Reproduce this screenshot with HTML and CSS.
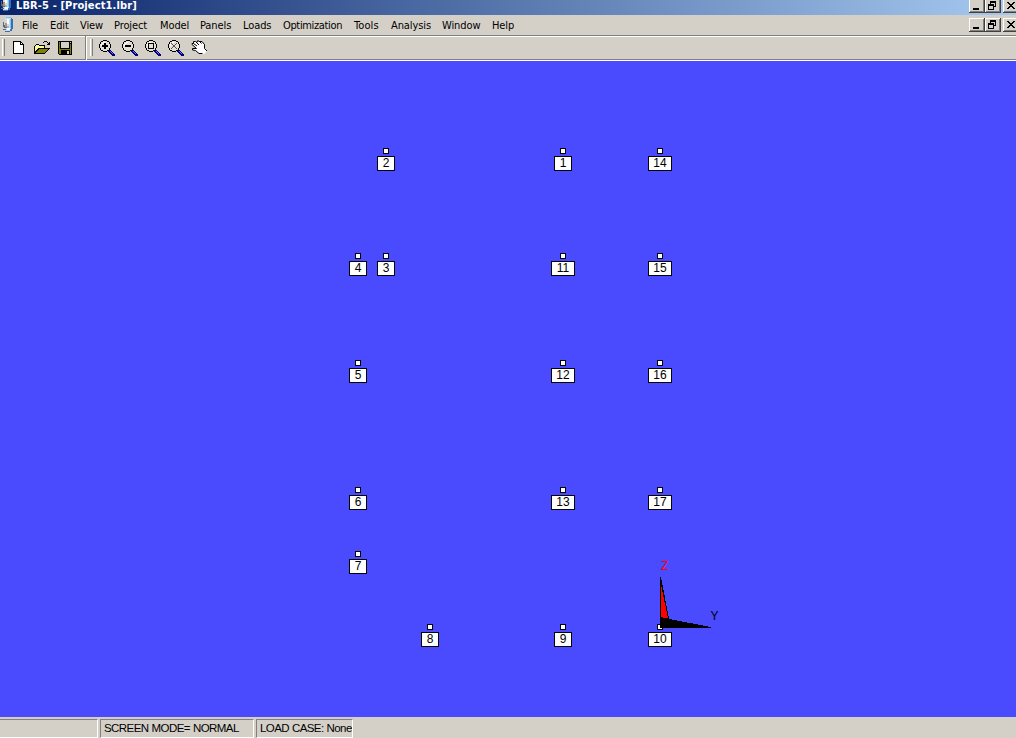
FILE: index.html
```html
<!DOCTYPE html>
<html lang="en">
<head>
<meta charset="utf-8">
<title>LBR-5 - [Project1.lbr]</title>
<link rel="stylesheet" href="styles.css">
</head>
<body>
<svg width="0" height="0" class="defs" shape-rendering="crispEdges">
  <defs>
    <symbol id="app" viewBox="0 0 12 16">
      <path fill="#c4def2" d="M3 1h6v13H3z"/>
      <path fill="#2f72b8" d="M9 1h1v1h1v10h-1v2H8v-2h1z"/>
      <path fill="#8fbde4" d="M4 0h5v1H4zM8 2h1v9H8zM5 9h2v2H5z"/>
      <path fill="#4a6c94" d="M1 5h1v3h1v2h2v1H2v-1H1zM3 14h5v1H3zM1 12h3v1H1z"/>
      <path fill="#d88848" d="M3 6h2v4H3z"/>
      <path fill="#fff" d="M5 2h2v5H5zM5 11h3v2H5z"/>
    </symbol>
    <symbol id="lens" viewBox="0 0 17 17">
      <path fill="#e4e0d8" d="M4 1h4v1h2v2h1v4h-1v2H8v1H4v-1H2V8H1V4h1V2h2z"/>
      <path fill="#000" d="M4 0h4v1H4zM2 1h2v1H2zM8 1h2v1H8zM1 2h1v2H1zM10 2h1v2h-1zM0 4h1v4H0zM11 4h1v4h-1zM1 8h1v2H1zM10 8h1v2h-1zM2 10h2v1H2zM8 10h2v1H8zM4 11h4v1H4z"/>
      <path fill="#fff" d="M3 3h1v1H3zM4 2h2v1H4zM2 4h1v2H2z"/>
      <path fill="#000080" d="M10 10h2v1h1v1h1v1h1v1h1v2h-3v-1h-1v-1h-1v-1h-1v-1H9v-1h1z"/>
      <path fill="#7878d0" d="M11 11h1v1h-1zM12 12h1v1h-1zM13 13h1v1h-1z"/>
    </symbol>
    <symbol id="min" viewBox="0 0 16 14"><path d="M4 9h6v2H4z"/></symbol>
    <symbol id="restore" viewBox="0 0 16 14"><path d="M5 2h6v6H9V7h1V4H6v1H5zM3 5h6v6H3zM4 7v3h4V7z" fill-rule="evenodd"/></symbol>
    <symbol id="close" viewBox="0 0 16 14"><path d="M4 3h2v1h1v1h2V4h1V3h2v1h-1v1h-1v1H9v1h1v1h1v1h1v1h-2V9H9V8H7v1H6v1H4V9h1V8h1V7h1V6H6V5H5V4H4z"/></symbol>
  </defs>
</svg>
<div class="window">
  <header class="titlebar">
    <svg class="app-icon" width="12" height="16"><use href="#app"/></svg>
    <h1>LBR-5 - [Project1.lbr]</h1>
    <div class="controls">
      <b class="btn"><svg width="16" height="14"><use href="#min"/></svg></b>
      <b class="btn"><svg width="16" height="14"><use href="#restore"/></svg></b>
      <b class="btn last"><svg width="16" height="14"><use href="#close"/></svg></b>
    </div>
  </header>
  <nav class="menubar">
    <svg class="app-icon" width="12" height="16"><use href="#app"/></svg>
    <div class="menus"><span>File</span><span>Edit</span><span>View</span><span>Project</span><span>Model</span><span>Panels</span><span>Loads</span><span class="optimization">Optimization</span><span class="tools">Tools</span><span>Analysis</span><span>Window</span><span>Help</span></div>
    <div class="controls">
      <b class="btn"><svg width="16" height="14"><use href="#min"/></svg></b>
      <b class="btn"><svg width="16" height="14"><use href="#restore"/></svg></b>
      <b class="btn last"><svg width="16" height="14"><use href="#close"/></svg></b>
    </div>
  </nav>
  <div class="toolbar">
    <div class="group files">
      <i class="grip"></i>
      <svg width="11" height="13" viewBox="0 0 11 13" shape-rendering="crispEdges">
        <path d="M0 0h8v1h1v1h1v1h1v10H0z"/><path fill="#fff" d="M1 1h6v3h3v8H1zM8 2h1v1H8z"/>
      </svg>
      <svg width="17" height="14" viewBox="0 0 17 14" shape-rendering="crispEdges">
        <path d="M1 4h1V3h3v1h6v3h5v1h-1v1h-1v1h-1v1h-1v1h-1v1H0V5h1z"/>
        <path fill="#ff6" d="M1 5h1V4h3v1h5v2H4v1H3v1H2v1H1z"/>
        <path fill="#fff" d="M2 4h1v1H2zM4 4h1v1H4zM3 5h1v1H3zM5 5h1v1H5zM7 5h1v1H7zM2 6h1v1H2zM6 6h1v1H6z"/>
        <path fill="#808000" d="M5 8h9v1h-1v1h-1v1h-1v1H2v-1h1v-1h1V9h1z"/>
        <path d="M9 1h1V0h3v1h1v1h1V1h1v3h-3V3h1V2h-1V1h-3v1H9z"/>
      </svg>
      <svg class="save" width="14" height="14" viewBox="0 0 14 14" shape-rendering="crispEdges">
        <path d="M0 0h14v14H1v-1H0z"/><path fill="#808000" d="M1 1h1v7h10V3h1v10H1z"/>
        <path fill="#d4d0c8" d="M3 1h8v6H3zM12 1h1v1h-1z"/><path d="M3 9h9v4H3z"/><path fill="#d4d0c8" d="M9 10h2v3H9z"/>
      </svg>
    </div>
    <div class="group zooms">
      <i class="grip"></i>
      <svg width="17" height="17" viewBox="0 0 17 17" shape-rendering="crispEdges"><use href="#lens"/><path d="M5 3h2v2h2v2H7v2H5V7H3V5h2z"/></svg>
      <svg width="17" height="17" viewBox="0 0 17 17" shape-rendering="crispEdges"><use href="#lens"/><path d="M3 5h6v2H3z"/></svg>
      <svg width="17" height="17" viewBox="0 0 17 17" shape-rendering="crispEdges"><use href="#lens"/><path fill-rule="evenodd" d="M3 3h6v6H3zM4 4v4h4V4z"/></svg>
      <svg width="17" height="17" viewBox="0 0 17 17" shape-rendering="crispEdges"><use href="#lens"/><path fill="#555" d="M3 3h1v1H3zM4 4h1v1H4zM5 5h2v2H5zM7 4h1v1H7zM8 3h1v1H8zM4 7h1v1H4zM3 8h1v1H3zM7 7h1v1H7zM8 8h1v1H8z"/></svg>
      <svg class="hand" width="17" height="15" viewBox="0 0 17 15">
        <path fill="#fff" d="M1 3h2L2 1h2l3 1 1-1 5 3 1 5 2 2-3 3H8l-3-3-3-1V8h3z"/>
        <path fill="none" stroke="#000" d="M5.500 8.500 1 4.500v-1h1.500L6 6M2.500 3.500v-2h2L8 5M6 2.500V1h2l2.500 2.500M9 1.500h2l2.500 3v4l2.500 2.500M5.500 8.500h-4v1.500l3 .5 3.500 3h3.500"/>
      </svg>
    </div>
  </div>
  <main>
    <svg class="model" width="1016" height="656" viewBox="0 61 1016 656" id="model" shape-rendering="crispEdges">
      <g id="nodes"></g>
      <path d="M660 577h1l8 42 42 8v1h-51z"/>
      <path fill="#f00" d="M661 585v32l3 1h4z"/>
      <text class="axis z" x="661" y="570">Z</text>
      <text class="axis y" x="710.500" y="620">Y</text>
    </svg>
  </main>
  <footer class="status">
    <div class="pane"></div><div class="pane mode">SCREEN MODE= NORMAL</div><div class="pane load">LOAD CASE: None</div>
  </footer>
</div>
<script src="model.js"></script>
</body>
</html>
```
FILE: styles.css
```css
body { margin: 0; overflow: hidden; background: #d4d0c8; color: #000; font: 11px/13px "DejaVu Sans Condensed", "DejaVu Sans", sans-serif; }
.defs { position: absolute; }
.window { width: 1016px; height: 738px; display: flex; flex-direction: column; overflow: hidden; }
.titlebar { height: 15px; flex: none; display: flex; overflow: hidden; background: linear-gradient(90deg, #0a246a, #a6caf0); }
.titlebar .app-icon { margin: -4px 4px 0 0; }
h1 { margin: -1px 0 0; font: bold 11px/14px "DejaVu Sans Condensed", "DejaVu Sans", sans-serif; color: #fff; letter-spacing: 0.12px; white-space: nowrap; }
.controls { margin-left: auto; display: flex; width: 47px; overflow: hidden; flex: none; }
.btn { box-sizing: border-box; width: 16px; height: 14px; flex: none; background: #d4d0c8; box-shadow: inset -1px -1px #404040, inset 1px 1px #fff, inset -2px -2px #808080; }
.btn svg { display: block; }
.last { margin-left: 2px; }
.titlebar .controls { margin-top: -1px; }
.menubar { height: 20px; flex: none; display: flex; }
.menubar .app-icon { margin: 2px 10px 0 2px; }
.menubar .controls { margin-top: 3px; }
.menus { display: grid; grid-template-columns: 28px 30px 34px 46px 40px 43px 40px 71px 37px 51px 50px 40px; margin: 4px 0 0 -2px; letter-spacing: -0.1px; }
.optimization { letter-spacing: -0.35px; }
.tools { letter-spacing: 0.1px; }
.toolbar { box-sizing: border-box; height: 26px; flex: none; display: flex; border-top: 1px solid #808080; border-bottom: 1px solid #fff; box-shadow: inset 0 1px #fff, inset 0 -1px #808080; }
.group { display: flex; align-items: flex-start; }
.group svg { display: block; }
.grip { width: 1px; height: 17px; margin: 3px 0 0 2px; border-left: 1px solid #fff; border-right: 1px solid #808080; }
.files { width: 85px; border-right: 1px solid #808080; box-shadow: 1px 0 #fff; }
.files svg { margin: 5px 0 0 8px; }
.files .grip + svg { margin-left: 8px; margin-right: 2px; }
.files .save { margin-left: 7px; }
.zooms .grip { margin-left: 4px; margin-right: 6px; }
.zooms svg { margin: 4px 6px 0 0; }
main { height: 656px; flex: none; background: #4a4aff; }
.model { display: block; }
.node rect { fill: #fff; stroke: #000; }
.node text { font: 12px "Liberation Sans", Arial, sans-serif; text-anchor: middle; }
.axis { font: 12px "Liberation Sans", Arial, sans-serif; }
.z { fill: #f00; }
.y { fill: #000; }
.status { height: 21px; flex: none; display: flex; gap: 2px; padding-top: 2px; box-sizing: border-box; }
.pane { box-sizing: border-box; width: 98px; height: 19px; border: 1px solid; border-color: #808080 #fff #fff #808080; font: 11.5px/17px "Liberation Sans", Arial, sans-serif; white-space: nowrap; overflow: hidden; }
.pane:first-child { border-left: 0; }
.mode { width: 154px; padding-left: 3px; letter-spacing: -0.58px; word-spacing: 0.5px; }
.load { width: 97px; padding-left: 3px; letter-spacing: -0.6px; word-spacing: 0.5px; }
```
FILE: model.js
```js
const nodes = [
  [2, 386, 151], [1, 563, 151], [14, 660, 151],
  [4, 358, 256], [3, 386, 256], [11, 563, 256], [15, 660, 256],
  [5, 358, 363], [12, 563, 363], [16, 660, 363],
  [6, 358, 490], [13, 563, 490], [17, 660, 490],
  [7, 358, 554], [8, 430, 627], [9, 563, 627], [10, 660, 627]
];
document.getElementById("nodes").innerHTML = nodes.map(([id, x, y]) => {
  const w = id > 9 ? 24 : 18;
  return `<g class="node"><rect x="${x - 2.5}" y="${y - 2.5}" width="5" height="5"/>
    <rect x="${x - w / 2 + 0.5}" y="${y + 5.5}" width="${w - 1}" height="14"/>
    <text x="${x}" y="${y + 16}">${id}</text></g>`;
}).join("");
```
